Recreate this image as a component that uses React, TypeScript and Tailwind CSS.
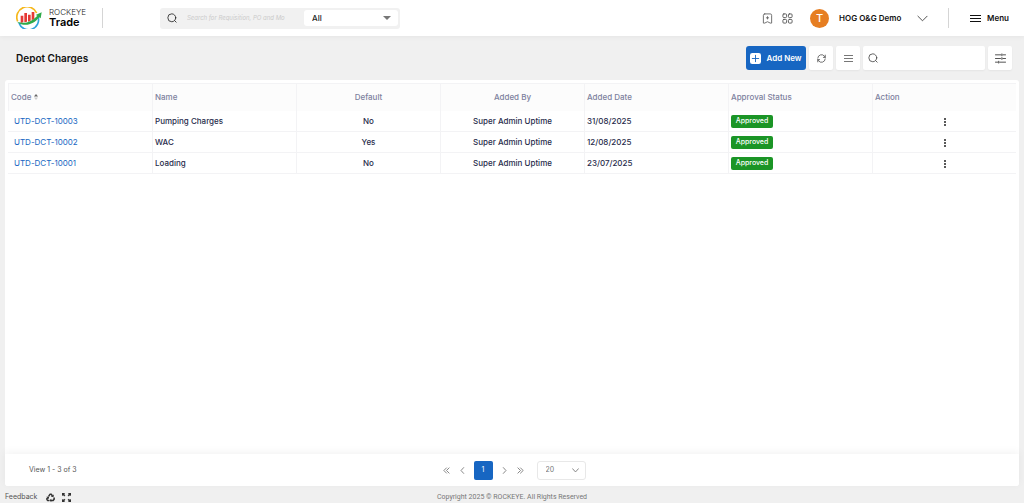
import { useState } from 'react';
import type { ReactNode } from 'react';

const rows = [
  { code: 'UTD-DCT-10003', name: 'Pumping Charges', isDefault: 'No', addedBy: 'Super Admin Uptime', date: '31/08/2025', status: 'Approved' },
  { code: 'UTD-DCT-10002', name: 'WAC', isDefault: 'Yes', addedBy: 'Super Admin Uptime', date: '12/08/2025', status: 'Approved' },
  { code: 'UTD-DCT-10001', name: 'Loading', isDefault: 'No', addedBy: 'Super Admin Uptime', date: '23/07/2025', status: 'Approved' },
];

function Icon({ className, children }: { className: string; children: ReactNode }) {
  return (
    <svg
      viewBox="0 0 24 24"
      fill="none"
      stroke="currentColor"
      strokeWidth="2"
      strokeLinecap="round"
      strokeLinejoin="round"
      aria-hidden="true"
      className={`shrink-0 ${className}`}
    >
      {children}
    </svg>
  );
}

function SearchIcon({ className }: { className: string }) {
  return (
    <Icon className={className}>
      <circle cx="11.5" cy="11.5" r="9.5" />
      <path d="M18.5 18.5 22 22" />
    </Icon>
  );
}

function Logo() {
  return (
    <svg viewBox="0 0 78 66" className="h-[22px] w-[26px] shrink-0" fill="none" aria-hidden="true">
      <path d="M5 43A30 30 0 0 1 62 18" stroke="#f6b81c" strokeWidth="5" />
      <path d="M66 28a30 30 0 0 1-57 20" stroke="#2fa3dc" strokeWidth="5" />
      <path d="M14 26h8v20l-8 2zM25 18h8v26l-8 2zM36 23h8v18l-8 3zM47 15h8v21l-8 4z" fill="#e53935" />
      <path d="M3 44c22 8 44 1 61-18l-5-2 18-8-3 18-5-3C54 53 24 62 3 44Z" fill="#2eaa4a" />
    </svg>
  );
}

function Header() {
  return (
    <header className="relative flex h-9 items-center bg-white pr-[15px] pl-4 shadow-[0_1px_5px_rgba(0,0,0,0.05)]">
      <a href="#" className="flex w-[86px] items-center gap-[7px]">
        <Logo />
        <span className="flex flex-col">
          <span className="text-[8px] leading-[9px] font-light text-[#222]">ROCKEYE</span>
          <span className="text-[11px] leading-[11px] font-semibold text-black">Trade</span>
        </span>
      </a>
      <div className="h-5 w-px bg-[#d5d5d5]" />

      <form className="ml-[57px] flex h-[21px] w-60 items-center rounded-[3px] bg-[#f1f1f1] pr-[2px] pl-[7px]">
        <SearchIcon className="size-[10px] text-[#222]" />
        <input
          type="text"
          aria-label="Search"
          placeholder="Search for Requisition, PO and Mo"
          className="mr-4 ml-[10px] min-w-0 flex-1 bg-transparent text-[6px] leading-[10px] italic outline-none placeholder:text-[#cbcbcb]"
        />
        <div className="relative flex">
          <select aria-label="Search in" className="h-4 w-[94px] appearance-none rounded-[3px] bg-white pl-2 text-[8px] font-medium text-[#222]">
            <option>All</option>
          </select>
          <svg viewBox="0 0 8 4" className="pointer-events-none absolute top-[6px] right-[7px] h-1 w-2" aria-hidden="true">
            <path d="M0 0h8L4 4Z" fill="#777" />
          </svg>
        </div>
      </form>

      <div className="ml-auto flex items-center">
        <button type="button" aria-label="Bookmarks">
          <Icon className="size-[11px] text-[#666]">
            <path d="M6 2h12a3 3 0 0 1 3 3v17h-3l-6-3-6 3H3V5a3 3 0 0 1 3-3ZM12 8v5M9.500 10.500h5" />
          </Icon>
        </button>
        <button type="button" aria-label="Apps" className="ml-[9px]">
          <Icon className="size-[11px] text-[#555]">
            <rect x="2" y="2" width="8" height="8" rx="2" />
            <rect x="14" y="2" width="8" height="8" rx="2" />
            <rect x="2" y="14" width="8" height="8" rx="2" />
            <rect x="14" y="14" width="8" height="8" rx="2" />
          </Icon>
        </button>
        <button type="button" className="ml-[17px] flex items-center">
          <span className="flex size-[19px] items-center justify-center rounded-full bg-[#e67e22] text-[11px] font-medium text-white">T</span>
          <span className="ml-[10px] w-[68px] text-left text-[8px] font-semibold whitespace-nowrap text-[#111]">HOG O&amp;G Demo</span>
          <Icon className="ml-[10px] size-[11px] text-[#444]">
            <path d="m2 7 10 10L22 7" />
          </Icon>
        </button>
        <div className="ml-[20px] h-5 w-px bg-[#d5d5d5]" />
        <button type="button" className="ml-[21px] flex items-center gap-[6px] text-[8px] font-semibold text-[#111]">
          <svg viewBox="0 0 11 9" className="h-[9px] w-[11px]" aria-hidden="true">
            <path d="M0 1h11v1H0zM0 4h11v1H0zM0 7h11v1H0z" fill="#111" />
          </svg>
          Menu
        </button>
      </div>
    </header>
  );
}

function Toolbar() {
  const [query, setQuery] = useState('');

  return (
    <div className="flex h-11 items-center gap-[3px] pr-3 pl-4">
      <h1 className="mr-auto text-[10px] font-semibold text-[#111]">Depot Charges</h1>
      <button type="button" className="flex h-6 w-[60px] items-center justify-center gap-[5px] rounded-[3px] bg-[#1766c2] text-[8px] font-semibold whitespace-nowrap text-white">
        <Icon className="size-[11px]">
          <rect x="0" y="0" width="24" height="24" rx="5" fill="#fff" stroke="none" />
          <path d="M12 5v14M5 12h14" stroke="#1766c2" />
        </Icon>
        Add New
      </button>
      <button type="button" aria-label="Refresh" className="flex h-6 w-6 items-center justify-center rounded-[2px] bg-white text-[#444] shadow-xs">
        <Icon className="size-[9px]">
          <path d="M2 11a10 10 0 0 1 18-5l2 3M22 3v6h-5M22 13a10 10 0 0 1-18 5l-2-3M2 21v-6h5" />
        </Icon>
      </button>
      <button type="button" aria-label="List view" className="flex h-6 w-6 items-center justify-center rounded-[2px] bg-white text-[#777] shadow-xs">
        <svg viewBox="0 0 9 7" className="h-[7px] w-[9px]" aria-hidden="true">
          <path d="M0 0h9v1H0zM0 3h9v1H0zM0 6h9v1H0z" fill="currentColor" />
        </svg>
      </button>
      <div className="flex h-6 w-[122px] items-center gap-1 rounded-[2px] bg-white pl-[5px] shadow-xs">
        <SearchIcon className="size-[10px] text-[#444]" />
        <input
          type="text"
          aria-label="Search charges"
          value={query}
          onChange={(e) => setQuery(e.target.value)}
          className="min-w-0 flex-1 bg-transparent text-[8px] outline-none"
        />
      </div>
      <button type="button" aria-label="Filters" className="flex h-6 w-6 items-center justify-center rounded-[2px] bg-white text-[#444] shadow-xs">
        <Icon className="size-[11px]">
          <path d="M1 4h12M17 4h6M15 2v4M1 12h11M17 12h6M15 10v4M1 20h5M10 20h13M8 18v4" />
        </Icon>
      </button>
    </div>
  );
}

function ChargesTable() {
  const head = 'border-t border-l border-[#f3f3f5] px-[2px] pb-[2px] font-medium';
  const cell = 'border-b border-l border-[#f3f3f5] px-[2px]';

  return (
    <table className="w-full table-fixed border-separate border-spacing-0 text-left text-[8px] leading-[10px]">
      <thead>
        <tr className="h-7 bg-[#fcfcfc] text-[#7c819e]">
          <th scope="col" className={head}>
            <span className="flex items-center gap-[3px]">
              Code
              <svg viewBox="0 0 4 6" className="h-[6px] w-1" aria-hidden="true">
                <path d="M0 2.500 2 0l2 2.500Z" fill="#666" />
                <path d="M0 3.500h4L2 6Z" fill="#ccc" />
              </svg>
            </span>
          </th>
          <th scope="col" className={head}>Name</th>
          <th scope="col" className={`text-center ${head}`}>Default</th>
          <th scope="col" className={`text-center ${head}`}>Added By</th>
          <th scope="col" className={head}>Added Date</th>
          <th scope="col" className={head}>Approval Status</th>
          <th scope="col" className={head}>Action</th>
        </tr>
      </thead>
      <tbody className="font-medium text-[#272b4b]">
        {rows.map((row) => (
          <tr key={row.code} className="h-[21px]">
            <td className="border-b border-[#f3f3f5] px-[6px]">
              <a href="#" className="font-normal text-[#1766c2]">{row.code}</a>
            </td>
            <td className={cell}>{row.name}</td>
            <td className={`text-center ${cell}`}>{row.isDefault}</td>
            <td className={`text-center ${cell}`}>{row.addedBy}</td>
            <td className={cell}>{row.date}</td>
            <td className={cell}>
              <span className="flex h-[13px] w-[42px] items-center justify-center rounded-[2px] bg-[#1b9526] text-[7px] text-white">{row.status}</span>
            </td>
            <td className={cell}>
              <button type="button" aria-label={`Actions for ${row.code}`} className="mx-auto flex h-[9px] w-3 items-end justify-center">
                <svg viewBox="0 0 2 8" className="h-2 w-[2px]" aria-hidden="true">
                  <circle cx="1" cy="1" r="1" fill="#222" />
                  <circle cx="1" cy="4" r="1" fill="#222" />
                  <circle cx="1" cy="7" r="1" fill="#222" />
                </svg>
              </button>
            </td>
          </tr>
        ))}
      </tbody>
    </table>
  );
}

function Pagination() {
  return (
    <div className="grid h-8 grid-cols-[1fr_auto_1fr] items-center rounded-b-[3px] bg-white pr-5 pl-6 text-[7px] text-[#555] shadow-[0_-2px_8px_rgba(0,0,0,0.05)]">
      <span>View 1 - 3 of 3</span>
      <nav aria-label="Pagination" className="flex items-center text-[#777]">
        <button type="button" aria-label="First page">
          <Icon className="size-[7px]"><path strokeWidth="3" d="M12 3 3 12l9 9M21 3l-9 9 9 9" /></Icon>
        </button>
        <button type="button" aria-label="Previous page" className="ml-[9px]">
          <Icon className="size-[7px]"><path strokeWidth="3" d="m16 2-9 10 9 10" /></Icon>
        </button>
        <button type="button" aria-current="page" className="mx-2 h-[19px] w-[19px] rounded-[2px] bg-[#1766c2] text-[7px] text-white">1</button>
        <button type="button" aria-label="Next page">
          <Icon className="size-[7px]"><path strokeWidth="3" d="m8 2 9 10-9 10" /></Icon>
        </button>
        <button type="button" aria-label="Last page" className="ml-[9px]">
          <Icon className="size-[7px]"><path strokeWidth="3" d="m3 3 9 9-9 9M12 3l9 9-9 9" /></Icon>
        </button>
        <div className="relative ml-[13px] flex">
          <select aria-label="Rows per page" className="h-[19px] w-[49px] appearance-none rounded-[3px] border border-[#e8e8e8] bg-white pl-2 text-[7px] text-[#777]">
            <option>20</option>
          </select>
          <Icon className="pointer-events-none absolute top-[6px] right-[7px] size-[7px]">
            <path strokeWidth="3" d="m2 6 10 11L22 6" />
          </Icon>
        </div>
      </nav>
    </div>
  );
}

function Footer() {
  return (
    <footer className="grid h-[17px] grid-cols-[1fr_auto_1fr] items-center px-[5px] pt-[5px] text-[7px] text-[#777]">
      <div className="flex items-center">
        <a href="#" className="text-[#555]">Feedback</a>
        <button type="button" aria-label="Recycle" className="ml-[9px]">
          <Icon className="size-[9px] text-[#333]">
            <path strokeWidth="4" strokeLinecap="butt" d="M7 9l4-6h3l3 5M21 12l1 4-3 4h-6M9 20H4l-2-4 3-4" />
            <path fill="currentColor" stroke="none" d="m13 9 7 2 1-7ZM14 15v9l-5-4ZM1 10l7-1v7Z" />
          </Icon>
        </button>
        <button type="button" aria-label="Full screen" className="ml-[7px]">
          <Icon className="size-[9px] text-[#333]">
            <path fill="currentColor" stroke="none" d="M0 0h8L6 3l3 3-3 3-3-3-3 2ZM24 0v8l-3-2-3 3-3-3 3-3-2-3ZM0 24v-8l3 2 3-3 3 3-3 3 2 3ZM24 24h-8l2-3-3-3 3-3 3 3 3-2Z" />
          </Icon>
        </button>
      </div>
      <span className="font-['Roboto',sans-serif]">Copyright 2025 © ROCKEYE. All Rights Reserved</span>
    </footer>
  );
}

export default function App() {
  return (
    <div className="flex min-h-screen flex-col bg-[#f0f0f0] font-['Inter',sans-serif]">
      <Header />
      <Toolbar />
      <main className="mx-[5px] flex flex-1 flex-col rounded-[3px] bg-white">
        <div className="flex-1 px-[3px] pt-[3px]">
          <ChargesTable />
        </div>
        <Pagination />
      </main>
      <Footer />
    </div>
  );
}
